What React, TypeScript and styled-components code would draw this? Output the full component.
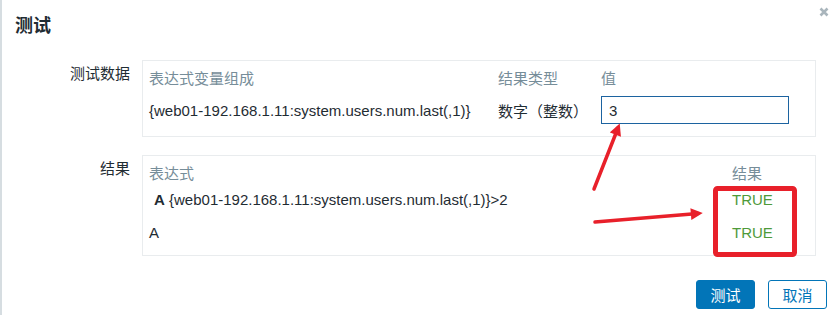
import React from 'react';
import styled, { createGlobalStyle } from 'styled-components';

const GlobalStyle = createGlobalStyle`
  body {
    margin: 0;
    background: #ffffff;
    overflow: hidden;
    font-family: 'Liberation Sans', 'Noto Sans CJK SC', sans-serif;
  }
`;

const colors = {
  text: '#1f2c33',
  muted: '#768d99',
  border: '#e9ecee',
  blue: '#0275b8',
  inputBorder: '#1c63a0',
  green: '#4e9a3a',
  red: '#e8202a',
};

const Page = styled.div`
  position: relative;
  width: 833px;
  height: 315px;
  box-sizing: border-box;
  border-left: 2px solid #d6dde1;
  background: #fff;
  color: ${colors.text};
  font-size: 15px;
`;

const Header = styled.div`
  display: flex;
  justify-content: space-between;
  align-items: flex-start;
  height: 60px;
  padding: 0 4px 0 13px;
  box-sizing: border-box;
`;

const Title = styled.h4`
  margin: 15px 0 0;
  font-size: 18px;
  line-height: 22px;
  font-weight: bold;
  color: ${colors.text};
`;

const Close = styled.button`
  margin-top: 7px;
  width: 10px;
  height: 10px;
  padding: 0;
  border: 0;
  background: none;
  display: flex;
`;

const FormRow = styled.div<{ $gap?: number }>`
  display: grid;
  grid-template-columns: 128px 674px;
  column-gap: 12px;
  margin-top: ${(p) => p.$gap ?? 0}px;
`;

const Label = styled.div`
  text-align: right;
  padding-top: 5px;
  line-height: 18px;
  white-space: nowrap;
`;

const Panel = styled.div<{ $bottom: number }>`
  border: 1px solid ${colors.border};
  padding: 9px 0 ${(p) => p.$bottom}px 6px;
`;

const DataGrid = styled.div`
  display: grid;
  grid-template-columns: 349px 103px 188px;
  align-items: center;
`;

const HeadCell = styled.div`
  color: ${colors.muted};
  line-height: 18px;
  height: 18px;
  white-space: nowrap;
`;

const ValueInput = styled.input`
  width: 188px;
  height: 28px;
  margin-top: 8px;
  box-sizing: border-box;
  border: 1px solid ${colors.inputBorder};
  padding: 0 7px;
  font: inherit;
  font-size: 15px;
  color: ${colors.text};
  outline: none;
`;

const DataCell = styled.div`
  margin-top: 8px;
  height: 28px;
  display: flex;
  align-items: center;
  white-space: nowrap;
`;

const ResultGrid = styled.div`
  display: grid;
  grid-template-columns: 583px 1fr;
`;

const ResultCell = styled.div<{ $ok?: boolean }>`
  height: 33px;
  display: flex;
  align-items: center;
  white-space: nowrap;
  color: ${(p) => (p.$ok ? colors.green : colors.text)};
`;

const Var = styled.b`
  margin-left: 5px;
`;

const Footer = styled.div`
  display: flex;
  justify-content: flex-end;
  gap: 13px;
  margin-top: 24px;
  padding-right: 6px;
`;

const Button = styled.button<{ $alt?: boolean }>`
  height: 29px;
  min-width: 59px;
  padding: 0 12px;
  border-radius: 3px;
  border: 1px solid ${colors.blue};
  background: ${(p) => (p.$alt ? '#fff' : colors.blue)};
  color: ${(p) => (p.$alt ? colors.blue : '#fff')};
  font-family: 'Liberation Sans', 'Noto Sans CJK SC', sans-serif;
  font-size: 15px;
`;

const Overlay = styled.svg`
  position: absolute;
  left: -2px;
  top: 0;
  pointer-events: none;
`;

const expression = '{web01-192.168.1.11:system.users.num.last(,1)}';

function Annotations() {
  return (
    <Overlay width="833" height="315" viewBox="0 0 833 315">
      <defs>
        <marker
          id="head"
          viewBox="0 0 10 10"
          refX="6"
          refY="5"
          markerWidth="4"
          markerHeight="3.4"
          orient="auto"
        >
          <path d="M0 0 L10 5 L0 10 z" fill={colors.red} />
        </marker>
      </defs>
      <line x1="594" y1="189" x2="618" y2="128" stroke={colors.red} strokeWidth="3.5" strokeLinecap="round" markerEnd="url(#head)" />
      <line x1="595" y1="222" x2="698" y2="213.5" stroke={colors.red} strokeWidth="3.5" strokeLinecap="round" markerEnd="url(#head)" />
      <rect x="715.5" y="188.5" width="79" height="66" rx="2" fill="none" stroke={colors.red} strokeWidth="5" />
    </Overlay>
  );
}

export default function App() {
  return (
    <>
      <GlobalStyle />
      <Page>
        <Header>
          <Title>测试</Title>
          <Close aria-label="close">
            <svg width="10" height="10" viewBox="0 0 10 10">
              <path d="M1.5 1.5 L8.5 8.5 M8.5 1.5 L1.5 8.5" stroke="#a9b5bc" strokeWidth="2.6" />
            </svg>
          </Close>
        </Header>

        <FormRow>
          <Label>测试数据</Label>
          <Panel $bottom={12}>
            <DataGrid>
              <HeadCell>表达式变量组成</HeadCell>
              <HeadCell>结果类型</HeadCell>
              <HeadCell>值</HeadCell>
              <DataCell>{expression}</DataCell>
              <DataCell>数字（整数）</DataCell>
              <ValueInput defaultValue="3" />
            </DataGrid>
          </Panel>
        </FormRow>

        <FormRow $gap={18}>
          <Label>结果</Label>
          <Panel $bottom={6}>
            <ResultGrid>
              <HeadCell>表达式</HeadCell>
              <HeadCell>结果</HeadCell>
              <ResultCell>
                <Var>A</Var>&nbsp;{expression}&gt;2
              </ResultCell>
              <ResultCell $ok>TRUE</ResultCell>
              <ResultCell>A</ResultCell>
              <ResultCell $ok>TRUE</ResultCell>
            </ResultGrid>
          </Panel>
        </FormRow>

        <Footer>
          <Button>测试</Button>
          <Button $alt>取消</Button>
        </Footer>

        <Annotations />
      </Page>
    </>
  );
}
